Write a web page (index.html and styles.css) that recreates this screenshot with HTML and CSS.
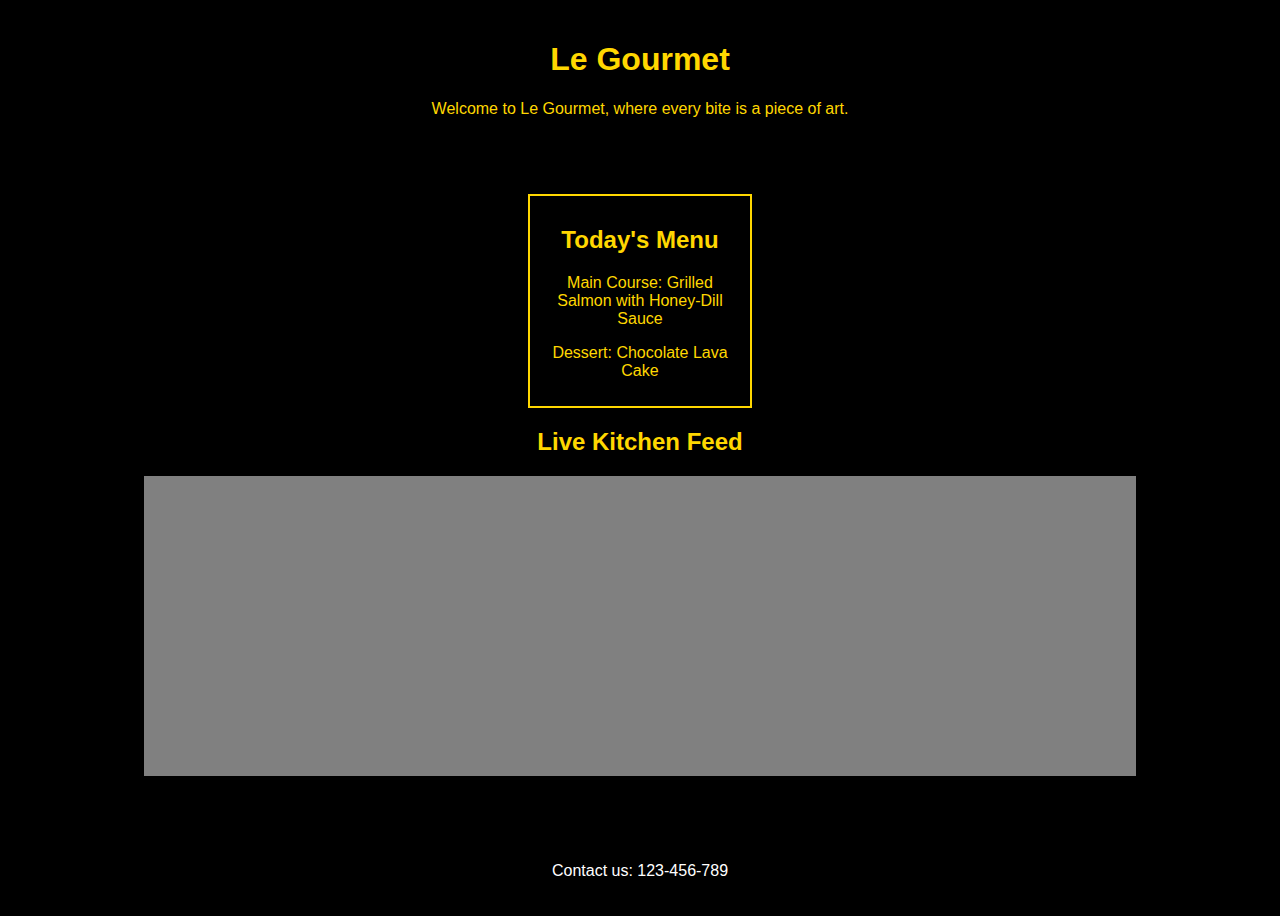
FILE: index.html
```html
<!DOCTYPE html>
<html lang="en">
<head>
<meta charset="utf-8">
<title>Le Gourmet</title>
<link rel="stylesheet" href="styles.css">
</head>
<body>
<header class="site-header">
  <h1 class="title">Le Gourmet</h1>
  <p class="tagline">Welcome to Le Gourmet, where every bite is a piece of art.</p>
</header>
<main class="content">
  <section class="menu">
    <h2 class="section-title">Today's Menu</h2>
    <p class="menu-item">Main Course: Grilled Salmon with Honey-Dill Sauce</p>
    <p class="menu-item">Dessert: Chocolate Lava Cake</p>
  </section>
  <section class="kitchen">
    <h2 class="section-title">Live Kitchen Feed</h2>
    <div class="feed"></div>
  </section>
</main>
<footer class="site-footer">
  <p class="contact">Contact us: 123-456-789</p>
</footer>
</body>
</html>
```
FILE: styles.css
```css
html, body {
  background: #000;
}
body {
  margin: 0;
  color: #FFD700;
  font-family: "Liberation Sans", Arial, sans-serif;
  text-align: center;
}
.site-header {
  padding: 20px;
}
.title {
  font-size: 32px;
  margin: 21.44px 0;
}
.tagline {
  font-size: 16px;
  margin: 16px 0;
}
.content {
  padding: 0 20px;
}
.menu {
  width: 200px;
  padding: 10px;
  border: 2px solid #FFD700;
  margin: 40px auto 20px;
}
.section-title {
  font-size: 24px;
  margin: 19.92px 0;
}
.menu-item {
  margin: 16px 0;
}
.feed {
  width: 80%;
  height: 300px;
  margin: 0 auto;
  background: #808080;
}
.site-footer {
  margin-top: 66px;
  padding: 20px;
  color: #fff;
}
.contact {
  margin: 0;
}
```
